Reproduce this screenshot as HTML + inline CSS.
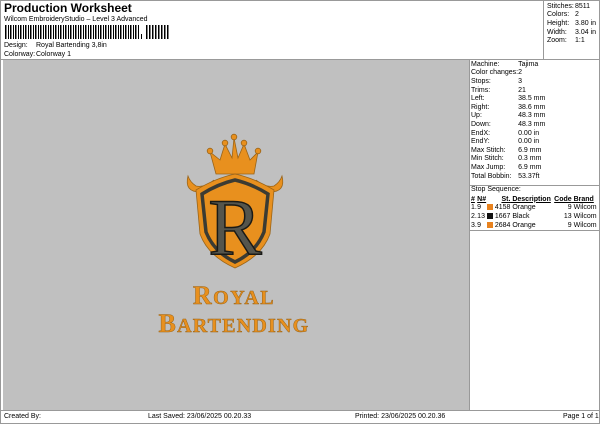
<!DOCTYPE html><html><head><style>
body{margin:0;width:600px;height:424px;position:relative;background:#fff;font-family:"Liberation Sans",sans-serif;font-size:7px;color:#000;overflow:hidden}
.a{position:absolute}
.bd{border:1px solid #999;box-sizing:border-box}
table{border-collapse:collapse;font-size:7px}
td{padding:0;height:8.6px;white-space:nowrap}
</style></head><body>
<div class="a bd" style="left:0;top:0;width:600px;height:424px"></div>
<div class="a" style="left:4px;top:1px;font-size:12px;font-weight:bold">Production Worksheet</div>
<div class="a" style="left:4px;top:16px">Wilcom EmbroideryStudio – Level 3 Advanced</div>
<div class="a" style="left:5px;top:25px;width:135px;height:14px;background:repeating-linear-gradient(90deg,#000 0 1.5px,#fff 1.5px 3px,#000 3px 4px,#fff 4px 5px)"></div>
<div class="a" style="left:141px;top:34px;width:1px;height:5px;background:#000"></div>
<div class="a" style="left:146px;top:25px;width:24px;height:14px;background:repeating-linear-gradient(90deg,#000 0 1.5px,#fff 1.5px 3px)"></div>
<div class="a" style="left:4px;top:42px">Design:</div><div class="a" style="left:36px;top:42px">Royal Bartending 3,8in</div>
<div class="a" style="left:4px;top:51px">Colorway:</div><div class="a" style="left:36px;top:51px">Colorway 1</div>
<div class="a" style="left:543px;top:0;width:1px;height:60px;background:#999"></div>
<div class="a" style="left:0;top:59px;width:600px;height:1px;background:#999"></div>
<table class="a" style="left:547px;top:2px;table-layout:fixed;width:52px"><col style="width:28px"><col><tr><td>Stitches:</td><td>8511</td></tr><tr><td>Colors:</td><td>2</td></tr><tr><td>Height:</td><td>3.80 in</td></tr><tr><td>Width:</td><td>3.04 in</td></tr><tr><td>Zoom:</td><td>1:1</td></tr></table>
<div class="a" style="left:3px;top:60px;width:466px;height:350px;background:#c0c0c0"></div>
<div class="a" style="left:469px;top:60px;width:1px;height:350px;background:#999"></div>
<table class="a" style="left:471px;top:60px"><tr><td style="width:47px">Machine:</td><td>Tajima</td></tr><tr><td>Color changes:</td><td>2</td></tr><tr><td>Stops:</td><td>3</td></tr><tr><td>Trims:</td><td>21</td></tr><tr><td>Left:</td><td>38.5 mm</td></tr><tr><td>Right:</td><td>38.6 mm</td></tr><tr><td>Up:</td><td>48.3 mm</td></tr><tr><td>Down:</td><td>48.3 mm</td></tr><tr><td>EndX:</td><td>0.00 in</td></tr><tr><td>EndY:</td><td>0.00 in</td></tr><tr><td>Max Stitch:</td><td>6.9 mm</td></tr><tr><td>Min Stitch:</td><td>0.3 mm</td></tr><tr><td>Max Jump:</td><td>6.9 mm</td></tr><tr><td>Total Bobbin:</td><td>53.37ft</td></tr></table>
<div class="a" style="left:470px;top:185px;width:130px;height:1px;background:#999"></div>
<div class="a" style="left:471px;top:186px">Stop Sequence:</div>
<table class="a" style="left:471px;top:195px;width:127px">
<tr style="font-weight:bold;text-decoration:underline"><td>#</td><td>N#</td><td style="text-align:right">St.</td><td>&nbsp;Description</td><td style="text-align:right">Code</td><td>&nbsp;Brand</td></tr>
<tr><td>1.</td><td>9 <span style="display:inline-block;width:6px;height:6px;background:#e8821e;vertical-align:-1px;margin-left:4px"></span></td><td style="text-align:right">4158</td><td>&nbsp;Orange</td><td style="text-align:right">9</td><td>&nbsp;Wilcom</td></tr>
<tr><td>2.</td><td>13 <span style="display:inline-block;width:6px;height:6px;background:#111;vertical-align:-1px"></span></td><td style="text-align:right">1667</td><td>&nbsp;Black</td><td style="text-align:right">13</td><td>&nbsp;Wilcom</td></tr>
<tr><td>3.</td><td>9 <span style="display:inline-block;width:6px;height:6px;background:#e8821e;vertical-align:-1px;margin-left:4px"></span></td><td style="text-align:right">2684</td><td>&nbsp;Orange</td><td style="text-align:right">9</td><td>&nbsp;Wilcom</td></tr></table>
<div class="a" style="left:470px;top:230px;width:130px;height:1px;background:#999"></div>
<div class="a" style="left:0;top:410px;width:600px;height:1px;background:#999"></div>
<div class="a" style="left:4px;top:413px">Created By:</div>
<div class="a" style="left:148px;top:413px">Last Saved: 23/06/2025 00.20.33</div>
<div class="a" style="left:355px;top:413px">Printed: 23/06/2025 00.20.36</div>
<div class="a" style="left:563px;top:413px">Page 1 of 1</div>
<svg class="a" style="left:150px;top:130px" width="170" height="150" viewBox="0 0 170 150">
<g fill="#e8901e" stroke="#9a6418" stroke-width="0.8">
<path d="M66 44 L60 22 L70 30 L75 14 L82 28 L84 8 L88 28 L94 14 L100 30 L108 22 L104 44 Z"/>
<circle cx="60" cy="21" r="2.8"/><circle cx="75" cy="13" r="2.8"/><circle cx="84" cy="7" r="2.8"/><circle cx="94" cy="13" r="2.8"/><circle cx="108" cy="21" r="2.8"/>
<path d="M38 46 Q34 62 50 62 Q60 58 64 50 Q54 58 46 56 Q40 52 38 46Z"/>
<path d="M132 46 Q136 62 120 62 Q110 58 106 50 Q116 58 124 56 Q130 52 132 46Z"/>
<path d="M46 60 Q66 48 85 44 Q104 48 124 60 L120 104 Q112 126 85 138 Q58 126 50 104 Z"/>
</g>
<path d="M52 64 Q68 54 85 50 Q102 54 118 64 L114 102 Q106 122 85 132 Q64 122 56 102Z" fill="none" stroke="#3b3b33" stroke-width="3.5"/>
<text x="85" y="124" text-anchor="middle" font-family="Liberation Serif,serif" font-size="80" fill="#55554c" stroke="#1a1a16" stroke-width="1.5">R</text>
</svg>
<div class="a" style="left:130px;top:281px;width:208px;text-align:center;font-family:'Liberation Serif',serif;font-weight:bold;color:#e8901e;font-size:26px;letter-spacing:1.5px;-webkit-text-stroke:0.5px #9a6418">R<span style="font-size:20px">OYAL</span></div>
<div class="a" style="left:120px;top:309px;width:228px;text-align:center;font-family:'Liberation Serif',serif;font-weight:bold;color:#e8901e;font-size:26px;letter-spacing:1.2px;-webkit-text-stroke:0.5px #9a6418">B<span style="font-size:20px">ARTENDING</span></div>
</body></html>
